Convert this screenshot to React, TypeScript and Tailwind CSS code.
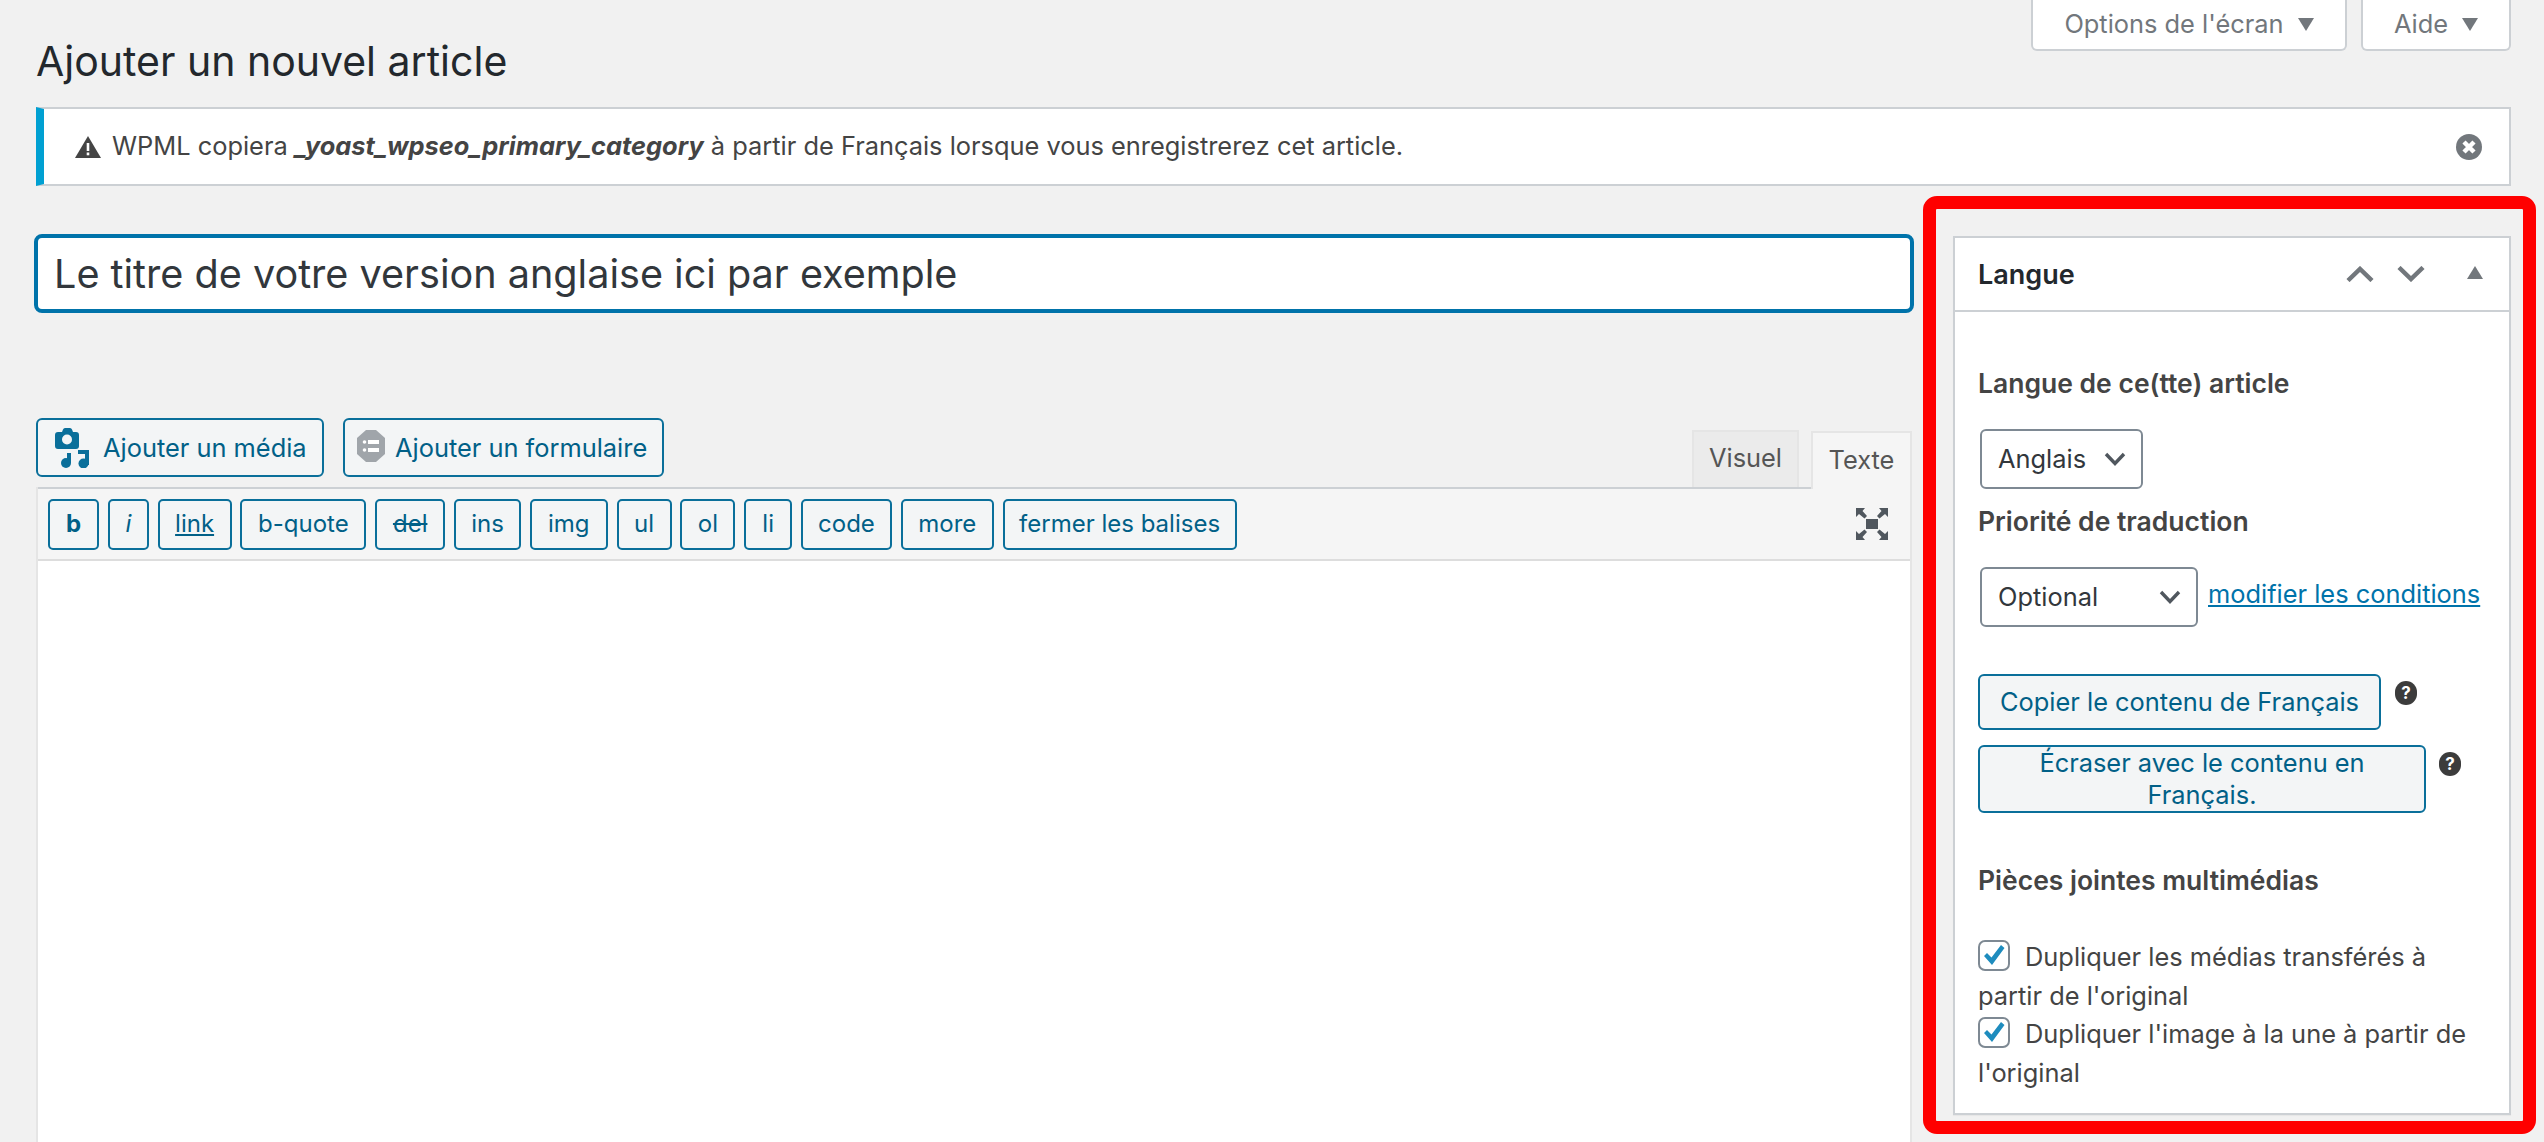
import React from 'react';

const tagButtons = [
  { label: 'b', cls: 'w-[51px] font-bold' },
  { label: 'i', cls: 'w-[41px] italic' },
  { label: 'link', cls: 'w-[74px] underline' },
  { label: 'b-quote', cls: 'w-[126px]' },
  { label: 'del', cls: 'w-[70px] line-through' },
  { label: 'ins', cls: 'w-[67px]' },
  { label: 'img', cls: 'w-[78px]' },
  { label: 'ul', cls: 'w-[55px]' },
  { label: 'ol', cls: 'w-[55px]' },
  { label: 'li', cls: 'w-[48px]' },
  { label: 'code', cls: 'w-[91px]' },
  { label: 'more', cls: 'w-[93px]' },
  { label: 'fermer les balises', cls: 'w-[234px]' },
];

const HelpIcon = () => (
  <span className="flex h-[24px] w-[22px] items-center justify-center rounded-full bg-[#3c3c3c] text-[17px] font-bold leading-none text-white">?</span>
);

const SelectChevron = () => (
  <svg viewBox="0 0 22 14" className="h-[14px] w-[22px] shrink-0">
    <path d="M2 2l9 9.500L20 2" fill="none" stroke="#50575e" strokeWidth="3.400" />
  </svg>
);

const Check = () => (
  <span className="flex h-[31px] w-[32px] shrink-0 items-center justify-center rounded-[7px] border-2 border-[#7e8993] bg-white">
    <svg viewBox="0 0 24 24" className="h-[24px] w-[24px]">
      <path d="M2 13l3-3 4.500 4.500L19 2l3.500 3L10 22z" fill="#1e8cbe" />
    </svg>
  </span>
);

export default function App() {
  return (
    <div className="relative h-[1142px] w-[2544px] overflow-hidden bg-[#f1f1f1] font-['Inter','Noto_Sans',sans-serif] text-[25.400px] text-[#444]">
      {/* Screen options */}
      <div className="flex h-[51px] justify-end gap-[14px] pr-[33px]">
        <div className="flex w-[316px] items-center justify-center gap-[14px] rounded-b-[6px] border-2 border-t-0 border-[#ccd0d4] bg-white text-[#72777c]">
          <span>Options de l'écran</span>
          <span className="h-0 w-0 border-x-[8px] border-t-[13px] border-x-transparent border-t-[#72777c]" />
        </div>
        <div className="flex w-[150px] items-center justify-center gap-[14px] rounded-b-[6px] border-2 border-t-0 border-[#ccd0d4] bg-white text-[#72777c]">
          <span>Aide</span>
          <span className="h-0 w-0 border-x-[8px] border-t-[13px] border-x-transparent border-t-[#72777c]" />
        </div>
      </div>

      <h1 className="ml-[36px] mt-[-15px] h-[71px] text-[41px] font-normal leading-[50px] text-[#23282d]">Ajouter un nouvel article</h1>

      {/* Notice */}
      <div className="ml-[36px] mr-[33px] flex h-[79px] items-center border-y-2 border-r-2 border-l-[8px] border-y-[#ccd0d4] border-r-[#ccd0d4] border-l-[#00a0d2] bg-white pl-[31px] pr-[27px]">
        <svg viewBox="0 0 26 22" className="mr-[11px] h-[22px] w-[26px] shrink-0">
          <path d="M13 0L26 22H0z" fill="#444" />
          <rect x="11.700" y="7" width="2.600" height="8" fill="#fff" />
          <rect x="11.700" y="16.500" width="2.600" height="2.800" fill="#fff" />
        </svg>
        <p className="flex-1">
          WPML copiera <b className="italic">_yoast_wpseo_primary_category</b> à partir de Français lorsque vous enregistrerez cet article.
        </p>
        <svg viewBox="0 0 26 26" className="h-[26px] w-[26px] shrink-0">
          <circle cx="13" cy="13" r="13" fill="#72777c" />
          <path d="M8 8l10 10M18 8L8 18" stroke="#fff" strokeWidth="4.500" />
        </svg>
      </div>

      <div className="mt-[10px] flex">
        {/* Editor column */}
        <div className="ml-[34px] w-[1880px] shrink-0 pt-[38px]">
          <div className="flex h-[79px] items-center rounded-[8px] border-[4px] border-[#0073aa] bg-white pl-[16px] text-[39.600px] text-[#32373c]">
            <span className="mt-[2px]">Le titre de votre version anglaise ici par exemple</span>
          </div>

          <div className="mr-[2px] mt-[105px] flex items-end justify-between pl-[2px]">
            <div className="flex gap-[19px] pb-[10px]">
              <button className="flex h-[59px] w-[288px] items-center gap-[14px] rounded-[6px] border-2 border-[#0a6f9a] bg-[#f3f5f6] pl-[17px] pt-[2px] text-[#016087]">
                <svg viewBox="0 0 34 40" className="mt-[-2px] h-[40px] w-[34px] shrink-0">
                  <path d="M8 1.500Q8.500 0 10 0h5q1.500 0 2 1.500L18 4h3a3 3 0 013 3v11a3 3 0 01-3 3H3a3 3 0 01-3-3V7a3 3 0 013-3h4z" fill="#0a6f9a" />
                  <circle cx="12" cy="11.500" r="5" fill="#f3f5f6" />
                  <path d="M23 22h11v15h-4V26h-7z" fill="#0a6f9a" />
                  <circle cx="11" cy="35" r="5" fill="#0a6f9a" />
                  <circle cx="28.500" cy="35.500" r="5" fill="#0a6f9a" />
                  <path d="M12 25h4v10h-4z" fill="#0a6f9a" />
                </svg>
                Ajouter un média
              </button>
              <button className="flex h-[59px] w-[321px] items-center gap-[10px] rounded-[6px] border-2 border-[#0a6f9a] bg-[#f3f5f6] pl-[12px] pt-[2px] text-[#016087]">
                <svg viewBox="0 0 28 32" className="mt-[-6px] h-[32px] w-[28px] shrink-0">
                  <path d="M9 0h10l9 8v16l-9 8H9l-9-8V8z" fill="#a0a5aa" />
                  <circle cx="7.500" cy="12" r="1.800" fill="#fff" />
                  <circle cx="7.500" cy="20" r="1.800" fill="#fff" />
                  <rect x="11" y="10" width="11" height="4" fill="#fff" />
                  <rect x="11" y="18" width="11" height="4" fill="#fff" />
                </svg>
                Ajouter un formulaire
              </button>
            </div>
            <div className="flex items-end gap-[12px]">
              <div className="flex h-[57px] w-[107px] items-center justify-center border-2 border-b-0 border-[#e5e5e5] bg-[#ebebeb] pb-[2px] text-[#555]">Visuel</div>
              <div className="z-10 mb-[-2px] flex h-[58px] w-[101px] items-center justify-center border-2 border-b-0 border-[#e5e5e5] bg-[#f5f5f5] pb-[2px] text-[#555]">Texte</div>
            </div>
          </div>

          <div className="ml-[2px] mr-[2px] border-x-2 border-[#e5e5e5] bg-white">
            <div className="flex h-[74px] items-center justify-between border-b-2 border-t-2 border-b-[#dddddd] border-t-[#ccd0d4] bg-[#f5f5f5] pl-[10px] pr-[22px]">
              <div className="flex gap-[8.800px] text-[24px]">
                {tagButtons.map(tag => (
                  <button key={tag.label} className={`h-[51px] rounded-[5px] border-2 border-[#0a6f9a] bg-[#f3f5f6] text-[#016087] ${tag.cls}`}>
                    {tag.label}
                  </button>
                ))}
              </div>
              <svg viewBox="0 0 32 32" className="h-[32px] w-[32px]">
                <rect x="10" y="11" width="12" height="10" fill="#50575e" />
                <path d="M0 0h9L6.500 3 11 8 8.500 10.500 3 6 0 9zM32 0h-9l2.500 3L21 8l2.500 2.500L29 6l3 3zM0 32h9l-2.500-3L11 24l-2.500-2.500L3 26l-3-3zM32 32h-9l2.500-3L21 24l2.500-2.500L29 26l3-3z" fill="#50575e" />
              </svg>
            </div>
            <div className="h-[600px]" />
          </div>
        </div>

        {/* Highlighted language box */}
        <div className="ml-[9px] h-[938px] w-[613px] shrink-0 rounded-[14px] border-[13px] border-[#ff0000] pb-[6px] pl-[17px] pr-[12px] pt-[27px]">
          <div className="h-[879px] border-2 border-[#ccd0d4] bg-white shadow-[0_1px_1px_rgba(0,0,0,0.04)]">
            <div className="flex h-[74px] items-center border-b-2 border-[#ccd0d4] pl-[23px] pr-[26px]">
              <h2 className="mt-[3px] flex-1 text-[27px] font-semibold text-[#23282d]">Langue</h2>
              <svg viewBox="0 0 28 16" className="mr-[23px] h-[16px] w-[28px]">
                <path d="M2 14.500L14 3l12 11.500" fill="none" stroke="#72777c" strokeWidth="4.500" />
              </svg>
              <svg viewBox="0 0 28 16" className="mr-[42px] h-[16px] w-[28px]">
                <path d="M2 1.500L14 13 26 1.500" fill="none" stroke="#72777c" strokeWidth="4.500" />
              </svg>
              <span className="mb-[3px] h-0 w-0 border-x-[8px] border-b-[13px] border-x-transparent border-b-[#72777c]" />
            </div>

            <div className="pl-[23px] pr-[20px]">
              <div className="mt-[53px] text-[26.500px] font-semibold leading-[36px]">Langue de ce(tte) article</div>
              <div className="ml-[2px] mt-[28px] flex h-[60px] w-[163px] items-center justify-between rounded-[6px] border-2 border-[#7e8993] pl-[16px] pr-[15px] text-[#32373c]">
                Anglais <SelectChevron />
              </div>
              <div className="mt-[14px] text-[26.500px] font-semibold leading-[36px]">Priorité de traduction</div>
              <div className="mt-[28px] flex items-center gap-[10px]">
                <div className="ml-[2px] flex h-[60px] w-[218px] items-center justify-between rounded-[6px] border-2 border-[#7e8993] pl-[16px] pr-[15px] text-[#32373c]">
                  Optional <SelectChevron />
                </div>
                <a className="mb-[5px] whitespace-nowrap text-[#0073aa] underline">modifier les conditions</a>
              </div>

              <div className="mt-[47px] flex items-start gap-[14px]">
                <button className="h-[56px] w-[403px] rounded-[6px] border-2 border-[#0a6f9a] bg-[#f3f5f6] text-[#016087]">Copier le contenu de Français</button>
                <span className="mt-[7px]"><HelpIcon /></span>
              </div>
              <div className="mt-[15px] flex items-start gap-[13px]">
                <button className="h-[68px] w-[448px] rounded-[6px] border-2 border-[#0a6f9a] bg-[#f3f5f6] leading-[32px] text-[#016087]">
                  Écraser avec le contenu en<br />Français.
                </button>
                <span className="mt-[7px]"><HelpIcon /></span>
              </div>

              <div className="mt-[49px] text-[26.500px] font-semibold leading-[36px]">Pièces jointes multimédias</div>

              <div className="mt-[40px] leading-[38.500px]">
                <div>
                  <span className="mr-[15px] inline-flex -translate-y-[5px] align-[-6px]"><Check /></span>
                  Dupliquer les médias transférés à partir de l'original
                </div>
                <div>
                  <span className="mr-[15px] inline-flex -translate-y-[5px] align-[-6px]"><Check /></span>
                  Dupliquer l'image à la une à partir de l'original
                </div>
              </div>
            </div>
          </div>
        </div>
      </div>
    </div>
  );
}
